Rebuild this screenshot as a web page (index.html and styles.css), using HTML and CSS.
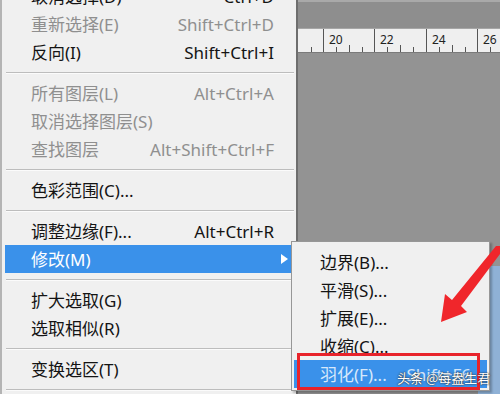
FILE: index.html
```html
<!DOCTYPE html>
<html lang="zh-CN">
<head>
    <meta charset="UTF-8">
    <title>选择菜单 - 修改</title>
    <link rel="stylesheet" href="styles.css">
</head>
<body>
<div class="app">
    <div class="menu">
        <div class="menu-list">
            <div class="item"><span class="label">取消选择(D)</span><span class="key">Ctrl+D</span></div>
            <div class="item off"><span class="label">重新选择(E)</span><span class="key">Shift+Ctrl+D</span></div>
            <div class="item"><span class="label">反向(I)</span><span class="key">Shift+Ctrl+I</span></div>
            <div class="sep"></div>
            <div class="item off"><span class="label">所有图层(L)</span><span class="key">Alt+Ctrl+A</span></div>
            <div class="item off"><span class="label">取消选择图层(S)</span></div>
            <div class="item off"><span class="label">查找图层</span><span class="key">Alt+Shift+Ctrl+F</span></div>
            <div class="sep"></div>
            <div class="item"><span class="label">色彩范围(C)...</span></div>
            <div class="sep"></div>
            <div class="item"><span class="label">调整边缘(F)...</span><span class="key">Alt+Ctrl+R</span></div>
            <div class="item active"><span class="label">修改(M)</span>
                <svg class="more" width="7" height="10" viewBox="0 0 7 10"><path d="M0 0 L7 5 L0 10 Z" fill="#fff"/></svg>
            </div>
            <div class="sep"></div>
            <div class="item"><span class="label">扩大选取(G)</span></div>
            <div class="item"><span class="label">选取相似(R)</span></div>
            <div class="sep"></div>
            <div class="item"><span class="label">变换选区(T)</span></div>
            <div class="sep"></div>
        </div>
    </div>

    <div class="workspace">
        <div class="topbar"></div>
        <div class="ruler">
            <svg width="203" height="23" viewBox="0 0 203 23">
                <g stroke="#555" stroke-width="1">
                    <line x1="13.5" y1="18" x2="13.5" y2="23"/>
                    <line x1="25.5" y1="0" x2="25.5" y2="23"/>
                    <line x1="38.5" y1="18" x2="38.5" y2="23"/>
                    <line x1="51.5" y1="16" x2="51.5" y2="23"/>
                    <line x1="64.5" y1="18" x2="64.5" y2="23"/>
                    <line x1="76.5" y1="0" x2="76.5" y2="23"/>
                    <line x1="89.5" y1="18" x2="89.5" y2="23"/>
                    <line x1="102.5" y1="16" x2="102.5" y2="23"/>
                    <line x1="115.5" y1="18" x2="115.5" y2="23"/>
                    <line x1="128.5" y1="0" x2="128.5" y2="23"/>
                    <line x1="141.5" y1="18" x2="141.5" y2="23"/>
                    <line x1="154.5" y1="16" x2="154.5" y2="23"/>
                    <line x1="167.5" y1="18" x2="167.5" y2="23"/>
                    <line x1="179.5" y1="0" x2="179.5" y2="23"/>
                    <line x1="192.5" y1="18" x2="192.5" y2="23"/>
                </g>
                <g class="ruler-num">
                    <text x="31" y="15">20</text>
                    <text x="82" y="15">22</text>
                    <text x="134" y="15">24</text>
                    <text x="185" y="15">26</text>
                </g>
            </svg>
        </div>
        <div class="canvas">
            <div class="doc"></div>
        </div>
    </div>
</div>

<div class="submenu">
    <div class="item"><span class="label">边界(B)...</span></div>
    <div class="item"><span class="label">平滑(S)...</span></div>
    <div class="item"><span class="label">扩展(E)...</span></div>
    <div class="item"><span class="label">收缩(C)...</span></div>
    <div class="item active"><span class="label">羽化(F)...</span><span class="key">Shift+F6</span></div>
</div>

<div class="mark-box"></div>

<svg class="pointer" width="70" height="90" viewBox="0 0 70 90">
    <path d="M70 4 L70 12 L31 64 L37 70 L11 80 L15 52 L22 58 L66 4 Z" fill="#f0262b"/>
</svg>

<div class="watermark">头条 @每盎生君</div>
</body>
</html>
```

FILE: styles.css
```css
* { box-sizing: border-box; }
html, body {
    margin: 0;
    width: 500px;
    height: 394px;
    overflow: hidden;
}
body {
    position: relative;
    font-family: "Noto Sans", "Noto Sans CJK SC", sans-serif;
    font-size: 17px;
    color: #141414;
    background: #959595;
}
.app { display: flex; height: 394px; }

/* main menu */
.menu {
    width: 298px;
    flex: none;
    background: #f0f0f0;
    border-left: 2px solid #b4b4b4;
    border-right: 2px solid #6e6e6e;
    padding: 0 4px 0 3px;
    overflow: hidden;
}
.menu-list { margin-top: -18px; }
.item {
    display: flex;
    align-items: center;
    height: 28px;
    padding: 0 18px 0 26px;
    white-space: nowrap;
    line-height: 1;
}
.item .label { flex: 1; }
.item .key { text-align: right; }
.item.off { color: #8f8f8f; }
.item.active { background: #3a91ea; color: #fff; }
.item .more { margin-right: -14px; }
.sep {
    height: 13px;
    padding-top: 6px;
    margin: 0 -2px 0 1px;
}
.sep::before {
    content: "";
    display: block;
    height: 1px;
    background: #bdbdbd;
    border-bottom: 1px solid #fbfbfb;
    box-sizing: content-box;
}

/* right side workspace */
.workspace {
    flex: 1;
    display: flex;
    flex-direction: column;
    min-height: 0;
}
.topbar {
    flex: none;
    height: 29px;
    background: #8e8e8e;
    border-top: 2px solid #a9a9a9;
    border-bottom: 1px solid #a6a6a6;
}
.ruler {
    flex: none;
    height: 24px;
    background: #efefef;
    border-bottom: 1px solid #7a7a7a;
}
.ruler svg { display: block; }
.ruler-num text {
    font-family: "Noto Sans", sans-serif;
    font-size: 12px;
    fill: #222;
}
.canvas {
    flex: 1;
    min-height: 0;
    overflow: hidden;
    background: #939393;
}
.doc {
    margin: 213px 0 0 180px;
    height: 140px;
    background: #8fb1d6;
}

/* submenu */
.submenu {
    position: absolute;
    left: 291px;
    top: 241px;
    width: 199px;
    height: 150px;
    padding: 6px 2px 2px;
    background: #f0f0f0;
    border: 1px solid #979797;
    box-shadow: 2px 2px 2px rgba(0, 0, 0, 0.25);
}
.submenu .item { padding-right: 16px; }
.submenu .item.active { color: #d6e8fb; }
.submenu .item.active .key { color: #cfe3f8; }

.mark-box {
    position: absolute;
    left: 297px;
    top: 353px;
    width: 183px;
    height: 37px;
    border: 3px solid #e8232b;
}
.pointer {
    position: absolute;
    left: 430px;
    top: 242px;
}
.watermark {
    position: absolute;
    left: 397px;
    top: 369px;
    font-family: "Noto Sans CJK SC", sans-serif;
    font-size: 13px;
    line-height: 18px;
    white-space: nowrap;
    color: #fff;
    text-shadow: 0 0 2px #333, 0 0 1px #222;
}
```
